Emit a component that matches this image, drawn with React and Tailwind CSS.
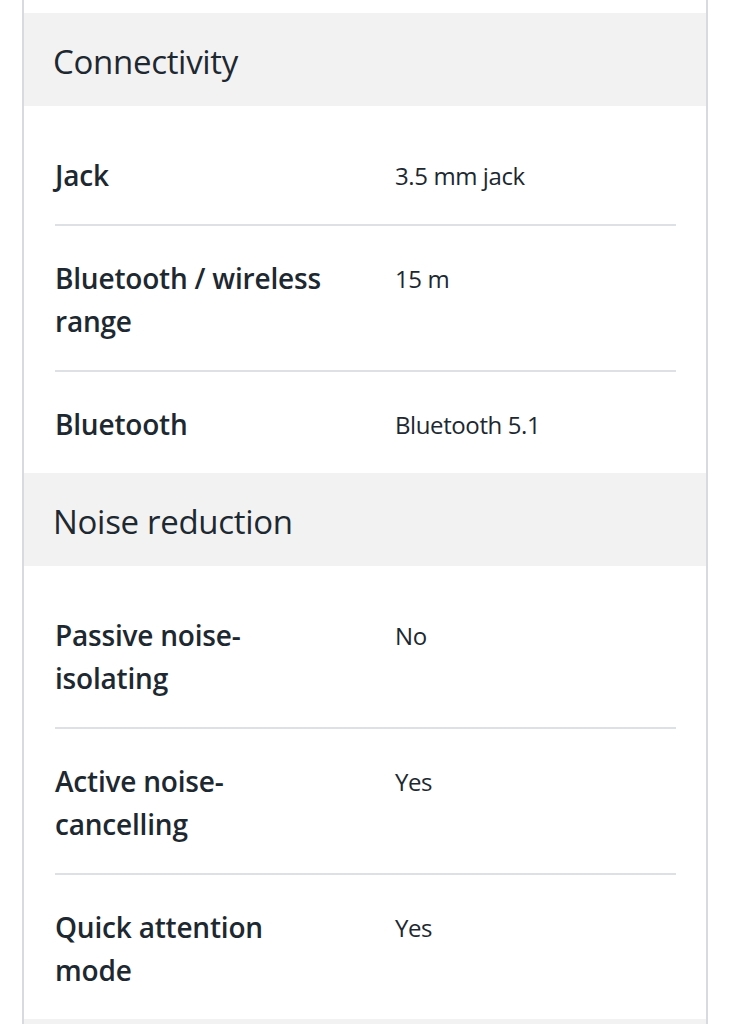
const sections = [
  {
    title: "Connectivity",
    rows: [
      { label: "Jack", value: "3.5 mm jack" },
      { label: "Bluetooth / wireless range", value: "15 m" },
      { label: "Bluetooth", value: "Bluetooth 5.1" },
    ],
  },
  {
    title: "Noise reduction",
    rows: [
      { label: "Passive noise-isolating", value: "No" },
      { label: "Active noise-cancelling", value: "Yes" },
      { label: "Quick attention mode", value: "Yes" },
    ],
  },
];

function SpecRow({ label, value, last }) {
  return (
    <div
      className={
        "grid grid-cols-[286px_1fr] gap-x-[54px] pt-[31px] pb-[27px] " +
        (last ? "" : "border-b-2 border-[#dde0e4]")
      }
    >
      <div className="text-[28px] leading-[43px] font-semibold tracking-[-0.2px]">{label}</div>
      <div className="text-[24px] leading-[43px] tracking-[-0.4px]">{value}</div>
    </div>
  );
}

export default function App() {
  return (
    <div className="min-h-screen bg-white text-[#1d2830]" style={{ fontFamily: '"Open Sans", "Liberation Sans", sans-serif' }}>
      <div className="ml-[22px] mr-[23px] border-x-2 border-[#d7dae1] pt-[13px]">
        {sections.map((s) => (
          <div key={s.title}>
            <div className="h-[93px] flex items-center bg-[#f2f2f2] pl-[29px] pt-[4px]">
              <h2 className="text-[33px] font-normal tracking-[-0.3px]">{s.title}</h2>
            </div>
            <div className="pt-[17px] pl-[31px] pr-[30px]">
              {s.rows.map((r, i) => (
                <SpecRow key={r.label} label={r.label} value={r.value} last={i === s.rows.length - 1} />
              ))}
            </div>
          </div>
        ))}
        <div className="h-[40px] bg-[#f2f2f2]" />
      </div>
    </div>
  );
}
